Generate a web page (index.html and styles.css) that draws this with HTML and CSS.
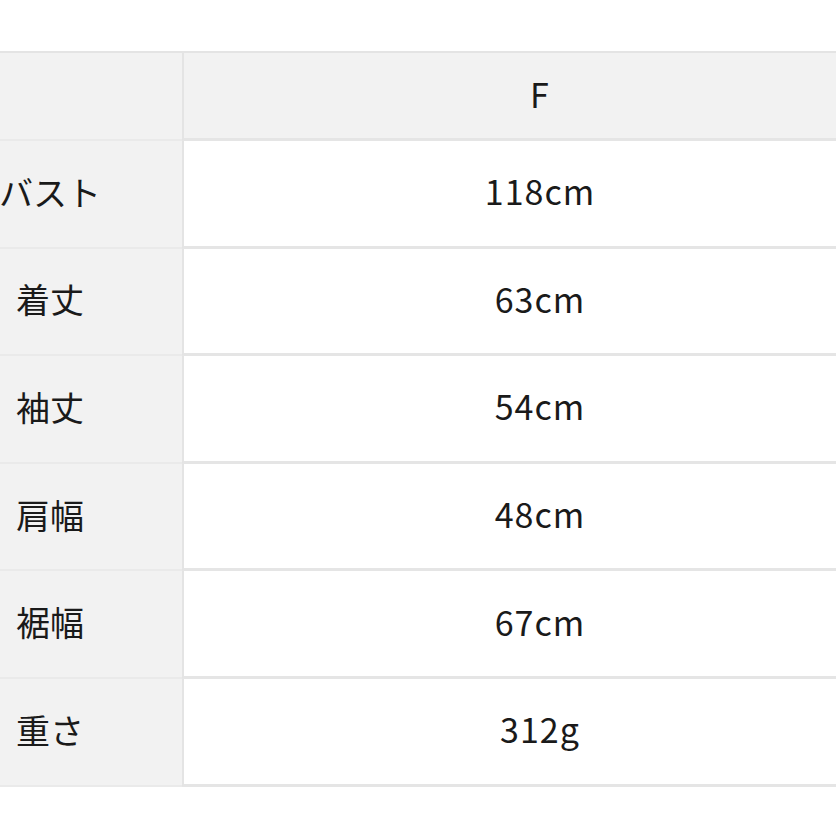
FILE: index.html
```html
<!DOCTYPE html>
<html lang="ja">
<head>
<meta charset="utf-8">
<title>サイズ表</title>
<link rel="stylesheet" href="styles.css">
</head>
<body>
<div class="frame">
<table class="size-table">
  <thead>
    <tr>
      <th class="label"></th>
      <th class="value head">F</th>
    </tr>
  </thead>
  <tbody>
    <tr><th class="label">バスト</th><td class="value">118cm</td></tr>
    <tr><th class="label">着丈</th><td class="value">63cm</td></tr>
    <tr><th class="label">袖丈</th><td class="value">54cm</td></tr>
    <tr><th class="label">肩幅</th><td class="value">48cm</td></tr>
    <tr><th class="label">裾幅</th><td class="value">67cm</td></tr>
    <tr><th class="label">重さ</th><td class="value">312g</td></tr>
  </tbody>
</table>
</div>
</body>
</html>
```

FILE: styles.css
```css
html, body {
  margin: 0;
  padding: 0;
  background: #ffffff;
}

.frame {
  width: 836px;
  height: 836px;
  overflow: hidden;
}

.size-table {
  border-collapse: separate;
  border-spacing: 0;
  margin: 51px 0 0 -82px;
  width: 978px;
  table-layout: fixed;
  font-family: "Noto Sans CJK JP", "Noto Sans", sans-serif;
  font-size: 34px;
  font-weight: 400;
  color: #1a1a1a;
}

.size-table th,
.size-table td {
  padding: 0 0 5px 0;
  text-align: center;
  vertical-align: middle;
  font-weight: 400;
  box-sizing: border-box;
}

.size-table .label {
  width: 264px;
  background: #f2f2f2;
  border-bottom: 2px solid #eaeaea;
}

.size-table .value {
  background: #ffffff;
  border-left: 2px solid #e4e4e4;
  border-bottom: 3px solid #e5e5e5;
  letter-spacing: 1px;
}

.size-table thead th {
  border-top: 2px solid #e4e4e4;
  height: 90px;
}

.size-table .value.head {
  background: #f2f2f2;
}

.size-table tbody th,
.size-table tbody td {
  height: 107.6px;
}
```
